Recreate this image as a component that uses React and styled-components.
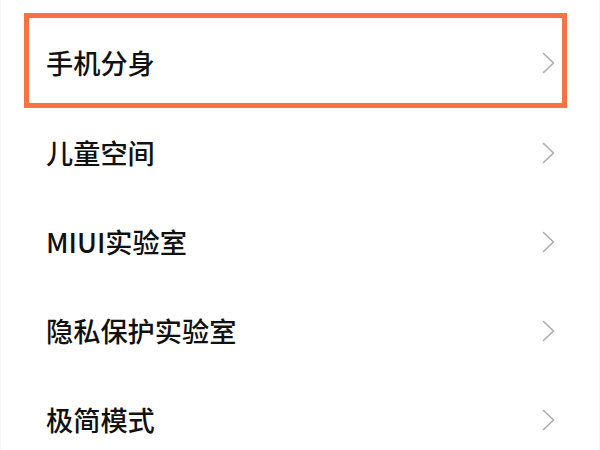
import React from 'react';
import styled, { createGlobalStyle } from 'styled-components';

const GlobalStyle = createGlobalStyle`
  html, body {
    margin: 0;
    padding: 0;
    background: #ffffff;
  }
  body {
    font-family: 'Noto Sans CJK SC', 'Noto Sans', sans-serif;
  }
`;

const Page = styled.div`
  width: 600px;
  height: 450px;
  box-sizing: border-box;
  overflow: hidden;
  background: #ffffff;
  border-left: 1px solid #f6f6f6;
  border-right: 1px solid #f6f6f6;
`;

const List = styled.div`
  display: flex;
  flex-direction: column;
  padding: 13px 32px 0 23px;
`;

const Row = styled.div`
  display: flex;
  align-items: center;
  justify-content: space-between;
  box-sizing: border-box;
  height: ${(props) => (props.highlighted ? '95px' : '89px')};
  padding: ${(props) => (props.highlighted ? '4px 7px 0 17px' : '0 12px 0 22px')};
  border: ${(props) => (props.highlighted ? '5px solid #fa7243' : 'none')};
`;

const Label = styled.span`
  font-size: 27.2px;
  font-weight: 500;
  color: #111111;
  line-height: 1;
`;

const Chevron = () => (
  <svg width="13" height="22" viewBox="0 0 13 22" fill="none">
    <polyline points="1.5,1.5 11.5,11 1.5,20.5" stroke="#acacac" strokeWidth="1.6" strokeLinecap="round" strokeLinejoin="round" />
  </svg>
);

const items = ['手机分身', '儿童空间', 'MIUI实验室', '隐私保护实验室', '极简模式'];

const App = () => (
  <>
    <GlobalStyle />
    <Page>
      <List>
        {items.map((item, index) => (
          <Row key={item} highlighted={index === 0}>
            <Label>{item}</Label>
            <Chevron />
          </Row>
        ))}
      </List>
    </Page>
  </>
);

export default App;
